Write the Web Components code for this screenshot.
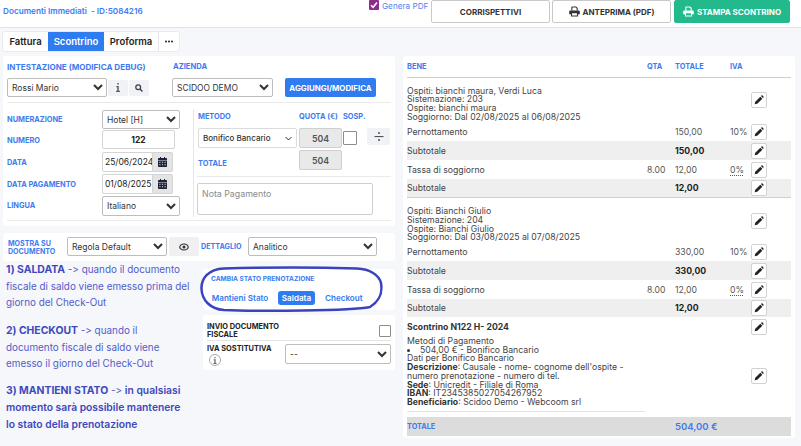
<!DOCTYPE html>
<html lang="it"><head><meta charset="utf-8"><title>Documenti Immediati</title>
<style>
html,body{margin:0;padding:0;background:#f5f7fb}
body{width:801px;height:446px;overflow:hidden;font-family:Inter,"Liberation Sans",sans-serif;color:#333}
</style></head><body>
<scidoo-page></scidoo-page>
<script>
const I={
 pencil:'<svg width="10" height="10" viewBox="0 0 12 12"><path fill="#222" d="M.8 11.2l.7-3.1L7.6 2l2.4 2.4-6.100 6.100zM8.300 1.300l.6-.6a1 1 0 0 1 1.400 0l1 1a1 1 0 0 1 0 1.400l-.6.6z"/></svg>',
 print:c=>`<svg width="11" height="11" viewBox="0 0 12 12"><path fill="${c}" d="M2.500 4.500V1.500a1 1 0 0 1 1-1h4.300L9.500 2.200v2.300H8.300V2.700L7.300 1.700H3.700v2.800zM1.500 5h9a1.300 1.300 0 0 1 1.300 1.300V9h-1.900v2.400H2.100V9H.2V6.300A1.300 1.300 0 0 1 1.500 5zM3.300 8v2.300h5.400V8z"/></svg>`,
 cal:'<svg width="9" height="10" viewBox="0 0 9 10"><path fill="#1c2238" d="M2 0h1v1h3V0h1v1h1.200a.8.800 0 0 1 .8.8V3H0V1.800A.8.800 0 0 1 .8 1H2zM0 3.500h9v5.700a.8.800 0 0 1-.8.8H.8a.8.800 0 0 1-.8-.8zM1.300 4.800v1h1.200v-1zm2.600 0v1h1.200v-1zm2.600 0v1h1.200v-1zM1.300 7.200v1h1.200v-1zm2.600 0v1h1.200v-1zm2.600 0v1h1.200v-1z"/></svg>',
 search:'<svg width="8" height="8" viewBox="0 0 10 10"><circle cx="4" cy="4" r="3" fill="none" stroke="#3a4150" stroke-width="1.600"/><path d="M6.300 6.300L9.300 9.300" stroke="#3a4150" stroke-width="1.800"/></svg>',
 info:'<svg width="6" height="9" viewBox="0 0 6 9"><path fill="#5a6270" d="M2.200 0h1.600v1.600H2.200zM1.300 3h2.500v4.700H5V9H1V7.700h1.200V4.200h-.9z"/></svg>',
 eye:'<svg width="10" height="8" viewBox="0 0 10 8"><ellipse cx="5" cy="4" rx="4.200" ry="3" fill="none" stroke="#333" stroke-width="1.200"/><circle cx="5" cy="4" r="1.500" fill="#333"/></svg>',
 divide:'<svg width="10" height="11" viewBox="0 0 10 11"><circle cx="5" cy="2" r="1" fill="#4a5160"/><circle cx="5" cy="9" r="1" fill="#4a5160"/><rect x="0.500" y="5" width="9" height="1.100" fill="#4a5160"/></svg>',
 dots:'<svg width="8" height="3" viewBox="0 0 8 3"><circle cx="1" cy="1.500" r="1" fill="#222"/><circle cx="4" cy="1.500" r="1" fill="#222"/><circle cx="7" cy="1.500" r="1" fill="#222"/></svg>',
 thin:'<svg width="7" height="5" viewBox="0 0 7 5"><path d="M.5 1l3 3 3-3" fill="none" stroke="#333" stroke-width="1"/></svg>',
 check:'<svg width="10" height="10" viewBox="0 0 10 10"><rect width="10" height="10" rx="1" fill="#8e2a8b"/><path d="M2 5.200l2.100 2.100L8 2.500" fill="none" stroke="#fff" stroke-width="1.600"/></svg>'
};
function def(name,html){
 customElements.define(name,class extends HTMLElement{
  connectedCallback(){
   if(this.shadowRoot)return;
   const a=this.attachShadow({mode:'open'});
   a.innerHTML=typeof html==='function'?html(n=>this.getAttribute(n)):html;
  }
 });
}
const N="Inter,'Liberation Sans',sans-serif";
const LBL=`font:700 7.400px/10px ${N};color:#3d7bf0;`;

def('ui-label',g=>`<style>:host{display:block;${LBL}white-space:nowrap}</style><slot></slot>`);

def('ui-select',g=>`<style>
:host{display:block}
select{display:block;width:100%;height:100%;box-sizing:border-box;margin:0;background:#fff;border:1px solid #bdbdbd;border-radius:2px;color:#333;font:400 8.500px ${N};padding:0}
</style><select><option>${g('value')}</option></select>`);

def('ui-input',g=>`<style>
:host{display:flex;align-items:center;box-sizing:border-box;background:#fff;border:1px solid #d4d4d4;border-radius:2px;font:${g('strong')!==null?700:400} 8.500px ${N};color:#222;padding:0 2px;white-space:nowrap;justify-content:${g('strong')!==null?'center':'flex-start'}}
</style><slot></slot>`);

def('ui-date',g=>`<style>
:host{display:flex;height:20px}
ui-input{width:51px;height:100%;padding:0 1px 0 2px}
b{display:flex;width:21px;align-items:center;justify-content:center;background:#e4e4e4;border:1px solid #d4d4d4;box-sizing:border-box;border-radius:0 2px 2px 0;margin-left:-1px}
</style><ui-input>${g('value')}</ui-input><b>${I.cal}</b>`);

def('ui-readonly',g=>`<style>
:host{display:flex;width:43px;height:20px;align-items:center;justify-content:center;box-sizing:border-box;background:#e9e9e9;border:1px solid #cfcfcf;border-radius:2px;font:600 8.800px ${N};color:#555}
</style><slot></slot>`);

def('ui-soft-btn',g=>`<style>
:host{display:flex;align-items:center;justify-content:center;background:#f1f2f5;border-radius:2px;height:16px}
</style><slot></slot>`);

def('pencil-btn',`<style>
:host{display:flex;width:16px;height:16px;box-sizing:border-box;align-items:center;justify-content:center;background:#fff;border:1px solid #d2d2d2;border-radius:2px}
</style>${I.pencil}`);

def('top-button',g=>`<style>
:host{display:flex;align-items:center;justify-content:center;gap:3px;box-sizing:border-box;height:23px;background:${g('green')!==null?'#22b98c':'#fff'};border:1px solid ${g('green')!==null?'#22b98c':'#c9c9c9'};border-radius:2px;font:700 8px ${N};color:${g('green')!==null?'#fff':'#333'};white-space:nowrap}
svg{display:block}
</style>${g('icon')?I.print(g('green')!==null?'#fff':'#333'):''}<slot></slot>`);

def('doc-header',`<style>
:host{display:flex;box-sizing:border-box;height:28px;background:#fff;border-bottom:1px solid #e2e2e2;padding-left:3px;align-items:flex-start}
.t{font:600 8.200px/10px ${N};color:#3d7bf0;margin-top:6px;width:366px;white-space:pre}
.g{display:flex;align-items:flex-start;gap:3px;width:62px;font:400 8.200px/10px ${N};color:#4f86ee}
.g svg{display:block}.g span{margin-top:1px;white-space:nowrap}
top-button:nth-of-type(1){width:119px}
top-button:nth-of-type(2){width:119px;margin-left:2px}
top-button:nth-of-type(3){width:116px;margin-left:3px}
</style>
<div class="t">Documenti Immediati  - ID:5084216</div>
<div class="g">${I.check}<span>Genera PDF</span></div>
<top-button>CORRISPETTIVI</top-button>
<top-button icon="1">ANTEPRIMA (PDF)</top-button>
<top-button icon="1" green>STAMPA SCONTRINO</top-button>`);

def('doc-tabs',`<style>
:host{display:inline-flex;height:21px;background:#fff;border:1px solid #e9ebf0;border-radius:3px;box-sizing:border-box;font:600 9.500px ${N};color:#222;overflow:hidden;margin-left:-1px}
span{display:flex;align-items:center;justify-content:center;height:100%}
.a{width:45px}.b{width:56px;background:#2f7bf0;color:#fff}.c{width:55px;border-right:1px solid #e4e6eb;box-sizing:border-box}.d{width:20px}
</style><span class="a">Fattura</span><span class="b">Scontrino</span><span class="c">Proforma</span><span class="d">${I.dots}</span>`);

def('form-card',`<style>
:host{display:block;box-sizing:border-box;width:392px;height:170px;background:#fff;border-radius:3px;padding:6px 4px 0;}
.r1{display:flex;height:40px;border-bottom:1px solid #eaeaea;box-sizing:content-box}
.c{display:flex;flex-direction:column;gap:6px}
.ctl{display:flex;height:19px;align-items:center}
.sec{display:flex;height:117px;border-bottom:1px solid #eaeaea}
.l{width:186px;padding-top:7px;border-right:0;position:relative}
.f{display:grid;grid-template-columns:95px auto;align-items:center;}
.n{padding-top:2px}
.vl{width:1px;background:#e6e6e6;margin:6px 3px 3px 0}
.rr{flex:1;padding-top:9px;margin-left:0}
.hd{display:flex;height:10px;}
.line{border-bottom:1px solid #eaeaea;margin:6px 0 6px 0;width:194px}
.add{display:flex;align-items:center;justify-content:center;width:91px;height:19px;background:#2f7bf0;border-radius:2px;color:#fff;font:700 7.900px ${N};margin-left:12px}
.met{display:flex;align-items:center;justify-content:space-between;box-sizing:border-box;width:99px;height:20px;border:1px solid #dcdcdc;border-radius:2px;padding:0 4px;font:500 8px ${N};color:#333;white-space:nowrap}
.cb{width:14px;height:14px;box-sizing:border-box;border:1px solid #8c8c8c;border-radius:1px;margin-left:1px}
.ta{width:176px;height:32px;box-sizing:border-box;border:1px solid #cfcfcf;border-radius:2px;font:400 8.800px ${N};color:#8a8a8a;padding:4px 4px}
</style>
<div class="r1">
 <div class="c" style="width:164px"><ui-label style="font-size:8.100px">INTESTAZIONE (MODIFICA DEBUG)</ui-label>
  <div class="ctl"><ui-select value="Rossi Mario" style="width:100px;height:19px"></ui-select>
  <ui-soft-btn style="width:20px;margin-left:1px">${I.info}</ui-soft-btn><ui-soft-btn style="width:20px;margin-left:1px">${I.search}</ui-soft-btn></div></div>
 <div class="c" style="margin-left:1px"><ui-label style="margin-left:1px;font-size:7.600px">AZIENDA</ui-label>
  <div class="ctl"><ui-select value="SCIDOO DEMO" style="width:101px;height:19px"></ui-select><div class="add">AGGIUNGI/MODIFICA</div></div></div>
</div>
<div class="sec">
 <div class="l">
  <div class="f" style="height:19px"><ui-label>NUMERAZIONE</ui-label><ui-select value="Hotel [H]" style="width:78px;height:19px"></ui-select></div>
  <div class="f" style="height:19px;margin-top:1px"><ui-label class="n">NUMERO</ui-label><ui-input strong style="width:73px;height:19px">122</ui-input></div>
  <div class="f" style="height:20px;margin-top:3px"><ui-label class="n">DATA</ui-label><ui-date value="25/06/2024"></ui-date></div>
  <div class="f" style="height:20px;margin-top:2px"><ui-label class="n">DATA PAGAMENTO</ui-label><ui-date value="01/08/2025"></ui-date></div>
  <div class="f" style="height:20px;margin-top:2px"><ui-label>LINGUA</ui-label><ui-select value="Italiano" style="width:78px;height:20px"></ui-select></div>
 </div>
 <div class="vl"></div>
 <div class="rr">
  <div class="hd"><ui-label style="width:101px;margin-left:1px">METODO</ui-label><ui-label style="width:44px">QUOTA (€)</ui-label><ui-label>SOSP.</ui-label></div>
  <div class="ctl" style="height:20px;margin-top:6px;margin-left:1px"><div class="met">Bonifico Bancario${I.thin}</div><ui-readonly style="margin-left:2px">504</ui-readonly><div class="cb"></div><ui-soft-btn style="width:23px;height:17px;margin-left:10px;margin-top:-3px">${I.divide}</ui-soft-btn></div>
  <div class="ctl" style="height:20px;margin-top:2px;margin-left:1px"><ui-label style="width:101px;padding-top:7px">TOTALE</ui-label><ui-readonly>504</ui-readonly></div>
  <div class="line"></div>
  <div class="ta">Nota Pagamento</div>
 </div>
</div>`);

def('options-card',`<style>
:host{display:flex;box-sizing:border-box;width:392px;height:28px;background:#fff;border-radius:3px;padding:4px 0 0 5px;align-items:flex-start}
.m{width:59px;margin-top:3px;font:700 7.100px/8px ${N};color:#3d7bf0}
.d{width:47px;margin:5px 0 0 2px;font-size:7.200px}
.e{width:30px;height:19px;margin-left:2px;background:#f0f0f2;border-radius:2px;display:flex;align-items:center;justify-content:center}
</style>
<div class="m">MOSTRA SU DOCUMENTO</div>
<ui-select value="Regola Default" style="width:100px;height:19px"></ui-select>
<div class="e">${I.eye}</div>
<ui-label class="d">DETTAGLIO</ui-label>
<ui-select value="Analitico" style="width:129px;height:19px"></ui-select>`);

def('help-text',`<style>
:host{display:block;width:187px;font:400 9.900px/16.200px ${N};font-variant-ligatures:none;font-feature-settings:"calt" 0;color:#525cc8;padding:0 0 0 3px;box-sizing:border-box}
p{margin:0 0 11px}
b{font-weight:700;color:#3f49bd;font-size:10.400px}
.s{font-weight:600;color:#3f49bd;font-size:10.300px}
</style>
<p><b>1) SALDATA</b> -&gt; quando il documento fiscale di saldo viene emesso prima del giorno del Check-Out</p>
<p><b>2) CHECKOUT</b> -&gt; quando il documento fiscale di saldo viene emesso il giorno del Check-Out</p>
<p><b>3) MANTIENI STATO</b> -&gt; <span class="s">in qualsiasi momento sarà possibile mantenere lo stato della prenotazione</span></p>`);

def('state-card',`<style>
:host{display:block;position:relative;box-sizing:border-box;width:192px;height:41px;background:#fff;border-radius:3px;padding:5px 0 0 8px}
.h{font:700 6.600px/10px ${N};color:#3d7bf0;white-space:nowrap}
.b{display:flex;align-items:center;margin-top:7px;font:600 8.100px ${N};color:#2f7bf0;white-space:nowrap}
.b span{display:flex;align-items:center;justify-content:center;height:14px}
.on{background:#2f7bf0;color:#fff;border-radius:3px;width:37px;margin:0 10px}
svg{position:absolute;left:-3px;top:-2px;overflow:visible;pointer-events:none}
</style>
<div class="h">CAMBIA STATO PRENOTAZIONE</div>
<div class="b"><span style="margin-left:1px;width:56px">Mantieni Stato</span><span class="on">Saldata</span><span>Checkout</span></div>
<svg width="183" height="45" viewBox="0 0 183 45"><path d="M24 1.500C60 .5 125 .5 157 1.500C170 2 179 8 181 16C182.500 25 181 33 170 40C150 44 60 44.500 24 43C10 42 2 33 1.500 22C1 12 8 2 24 1.500z" fill="none" stroke="#3a43bd" stroke-width="2.500"/></svg>`);

def('fiscal-card',`<style>
:host{display:block;box-sizing:border-box;width:192px;height:55px;background:#fff;border-radius:3px;padding:8px 4px 0 4px}
.a{display:flex;justify-content:space-between;height:14px;border-bottom:1px solid #e4e4e4;padding-bottom:3px;font:700 7.400px/7.500px ${N};color:#222}
.cb{width:10px;height:10px;border:1px solid #8c8c8c;border-radius:1px;margin-top:2px}
.b{display:flex;margin-top:3px;justify-content:space-between}
.l{font:700 7.400px/10px ${N};color:#222;white-space:nowrap}
.i{display:flex;align-items:center;justify-content:center;box-sizing:border-box;width:12px;height:12px;border:1px solid #aaa;border-radius:50%;margin:0 0 0 2px}
.i svg{height:7px}
</style>
<div class="a"><div>INVIO DOCUMENTO<br>FISCALE</div><div class="cb"></div></div>
<div class="b"><div class="l">IVA SOSTITUTIVA<div class="i">${I.info}</div></div><ui-select value="--" style="width:106px;height:20px"></ui-select></div>`);

def('bill-row',g=>`<style>
:host{display:grid;grid-template-columns:240px 28px 55px 21px 16px;align-items:center;height:${g('h')||19}px;background:${g('gray')!==null?'#efefef':'transparent'};font:400 8.700px ${N};color:#444;white-space:nowrap}
.n{font-weight:${g('head')!==null?700:400};color:${g('head')!==null?'#333':'#444'}}
.t{font-weight:${g('gray')!==null?700:400};color:${g('gray')!==null?'#1c1c1c':'#555'}}
.v{color:#555}
.u{text-decoration:underline dotted;text-underline-offset:2px}
</style><span class="n">${g('name')}</span><span class="t">${g('qta')||''}</span><span class="t">${g('tot')||''}</span><span class="v ${g('u')!==null?'u':''}">${g('iva')||''}</span><pencil-btn></pencil-btn>`);

def('bill-text',g=>`<style>
:host{display:grid;grid-template-columns:344px 16px;align-items:center;height:${g('h')}px;font:400 8.700px/8.700px ${N};color:#444;white-space:nowrap}
.x{padding-top:${g('top')||8}px}
:host([pay]) .x{padding-top:0;align-self:start}
:host([pay]) pencil-btn{margin-top:4px}
</style><div class="x"><slot></slot></div><pencil-btn></pencil-btn>`);

def('bill-card',`<style>
:host{display:block;box-sizing:border-box;width:392px;height:382px;background:#fff;border-radius:3px;padding:6px 4px 0}
.h{display:grid;grid-template-columns:240px 28px 55px 21px;height:15px;border-bottom:1px solid #cfcfcf;margin-bottom:0}
.sep{border-bottom:1px solid #cfcfcf}
.line{width:238px;border-bottom:1px solid #e2e2e2;margin-bottom:5px}
.tot{display:grid;grid-template-columns:268px 100px;align-items:center;height:19px;background:#dcdcdc;color:#3d7bf0}
.tot b{font:700 7.300px ${N}}
.tot span{font:600 9.500px ${N}}
.li{display:flex;align-items:center}
.li i{width:3px;height:3px;border-radius:50%;background:#333;margin-right:10px}
strong{font-weight:700;color:#333}
</style>
<div class="h"><ui-label>BENE</ui-label><ui-label>QTA</ui-label><ui-label>TOTALE</ui-label><ui-label>IVA</ui-label></div>
<bill-text h="44" style="box-sizing:border-box">Ospiti: bianchi maura, Verdi Luca<br>Sistemazione: 203<br>Ospite: bianchi maura<br>Soggiorno: Dal 02/08/2025 al 06/08/2025</bill-text>
<bill-row name="Pernottamento" tot="150,00" iva="10%"></bill-row>
<bill-row gray name="Subtotale" tot="150,00"></bill-row>
<bill-row name="Tassa di soggiorno" qta="8.00" tot="12,00" iva="0%" u="1"></bill-row>
<bill-row gray h="18" name="Subtotale" tot="12,00"></bill-row>
<div class="sep"></div>
<bill-text h="45">Ospiti: Bianchi Giulio<br>Sistemazione: 204<br>Ospite: Bianchi Giulio<br>Soggiorno: Dal 03/08/2025 al 07/08/2025</bill-text>
<bill-row h="18" name="Pernottamento" tot="330,00" iva="10%"></bill-row>
<bill-row gray name="Subtotale" tot="330,00"></bill-row>
<bill-row name="Tassa di soggiorno" qta="8.00" tot="12,00" iva="0%" u="1"></bill-row>
<bill-row gray h="18" name="Subtotale" tot="12,00"></bill-row>
<bill-row head h="20" name="Scontrino N122 H- 2024"></bill-row>
<bill-text h="74" pay>Metodi di Pagamento<div class="li"><i></i><span>504,00 € - Bonifico Bancario</span></div>Dati per Bonifico Bancario<br><strong>Descrizione</strong>: Causale - nome- cognome dell'ospite -<br>numero prenotazione - numero di tel.<br><strong>Sede</strong>: Unicredit - Filiale di Roma<br><strong>IBAN</strong>: IT2345385027054267952<br><strong>Beneficiario</strong>: Scidoo Demo - Webcoom srl</bill-text>
<div class="line"></div>
<div class="tot"><b>TOTALE</b><span>504,00 €</span></div>`);

def('scidoo-page',`<style>
:host{display:block;width:801px;height:446px}
.main{display:grid;grid-template-columns:400px 392px;padding:3px 0 0 3px;}
.left{display:flex;flex-direction:column;width:392px}
doc-tabs{align-self:flex-start;margin-bottom:4px;}
options-card{margin-top:7px}
.bot{display:flex;width:392px;justify-content:space-between}
.side{display:flex;flex-direction:column;gap:5px;margin-top:8px}
bill-card{margin-top:25px}
</style>
<doc-header></doc-header>
<div class="main">
 <div class="left">
  <doc-tabs></doc-tabs>
  <form-card></form-card>
  <options-card></options-card>
  <div class="bot"><help-text></help-text><div class="side"><state-card></state-card><fiscal-card></fiscal-card></div></div>
 </div>
 <bill-card></bill-card>
</div>`);
</script>
</body></html>
